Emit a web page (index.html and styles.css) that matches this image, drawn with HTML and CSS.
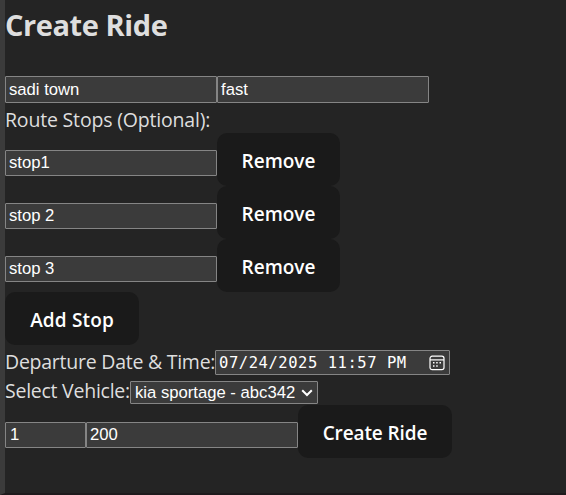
FILE: index.html
```html
<!DOCTYPE html>
<html lang="en">
<head>
<meta charset="utf-8">
<title>Create Ride</title>
<link rel="stylesheet" href="styles.css">
</head>
<body>
<main class="page">
  <h2 class="title"><span>Create Ride</span></h2>
  <form class="form">
    <div class="row places"><div class="field">sadi town</div><div class="field">fast</div></div>
    <div class="label route"><span>Route Stops (Optional):</span></div>
    <div class="row stop"><div class="field">stop1</div><button type="button" class="button remove">Remove</button></div>
    <div class="row stop"><div class="field">stop 2</div><button type="button" class="button remove">Remove</button></div>
    <div class="row stop"><div class="field">stop 3</div><button type="button" class="button remove">Remove</button></div>
    <button type="button" class="button add">Add Stop</button>
    <div class="row departure">
      <div class="label departure-label"><span>Departure Date &amp; Time:</span></div>
      <div class="field date"><span>07/24/2025 11:57 PM</span>
        <svg class="calendar" viewBox="0 0 16 16" width="16" height="16"><rect x="1" y="1.2" width="14" height="13.5" rx="2.2" fill="none" stroke="#fff" stroke-width="1.2"/><path d="M1 4.9h14" stroke="#fff" stroke-width="1.2"/><g fill="#fff"><path d="M7.2 7h1.5v1.5H7.2zM10.5 7H12v1.5h-1.5zM4 7h1.5v1.5H4zM4 10.2h1.5v1.5H4zM7.2 10.2h1.5v1.5H7.2z"/></g></svg>
      </div>
    </div>
    <div class="row vehicle">
      <div class="label vehicle-label"><span>Select Vehicle:</span></div>
      <div class="field select"><span>kia sportage - abc342</span>
        <svg class="chevron" viewBox="0 0 12 8" width="12" height="8"><path d="M1.2 1.2 6 6l4.800-4.800" fill="none" stroke="#fff" stroke-width="2"/></svg>
      </div>
    </div>
    <div class="row stop"><div class="field seats">1</div><div class="field">200</div><button type="button" class="button create">Create Ride</button></div>
  </form>
</main>
</body>
</html>
```
FILE: styles.css
```css
* { box-sizing: border-box; }
body {
  margin: 0;
  background: #242424;
  color: #dedede;
  font-family: "Open Sans", "Noto Sans", sans-serif;
}
.page {
  height: 495px;
  border-left: 5px solid #3b3b3b;
  border-bottom: 2px solid #1e1a1c;
  overflow: hidden;
}
.title {
  margin: 0;
  height: 76px;
  padding-top: 5px;
  font-size: 29px;
  line-height: 40px;
  font-weight: 700;
  letter-spacing: -0.42px;
  white-space: nowrap;
}
.form { margin: 0; }
.row { display: flex; }
.places { height: 28px; }
.places .field { height: 27px; line-height: 26px; }
.field {
  width: 212px;
  height: 26px;
  padding: 0 3px;
  border: 1px solid #858585;
  background: #3b3b3b;
  color: #fff;
  font: 16.67px/24px "Liberation Sans", sans-serif;
  border-radius: 1px;
  white-space: nowrap;
}
.label {
  font-size: 19.500px;
  line-height: 31px;
  letter-spacing: -0.25px;
  white-space: nowrap;
}
.route { height: 29px; letter-spacing: -0.18px; }
.stop { height: 53px; }
.stop .field { margin-top: 17px; }
.button {
  display: block;
  height: 53px;
  margin: 0;
  padding: 3px 0 0;
  border: 0;
  border-radius: 10px;
  background: #1a1a1a;
  color: #fff;
  font: 600 19px/26px "Open Sans", "Noto Sans", sans-serif;
  white-space: nowrap;
}
.remove { width: 123px; }
.add { width: 134px; letter-spacing: 0.15px; }
.create { width: 154px; letter-spacing: -0.1px; }
.departure { height: 33px; padding-top: 1px; }
.departure-label { width: 210px; }
.date {
  width: 235px;
  height: 25px;
  margin-top: 4px;
  display: flex;
  justify-content: space-between;
  align-items: center;
  font: 15.5px/23px "DejaVu Sans Mono", monospace;
  letter-spacing: 0.55px;
}
.date span { padding-top: 2px; }
.calendar { margin-right: 1px; }
.vehicle { height: 27px; }
.vehicle-label { width: 125px; line-height: 26px; }
.select {
  width: 188px;
  height: 23px;
  margin-top: 3px;
  padding: 0 4px;
  display: flex;
  justify-content: space-between;
  align-items: center;
  line-height: 21px;
}
.seats { width: 81px; padding-left: 4px; }
```
